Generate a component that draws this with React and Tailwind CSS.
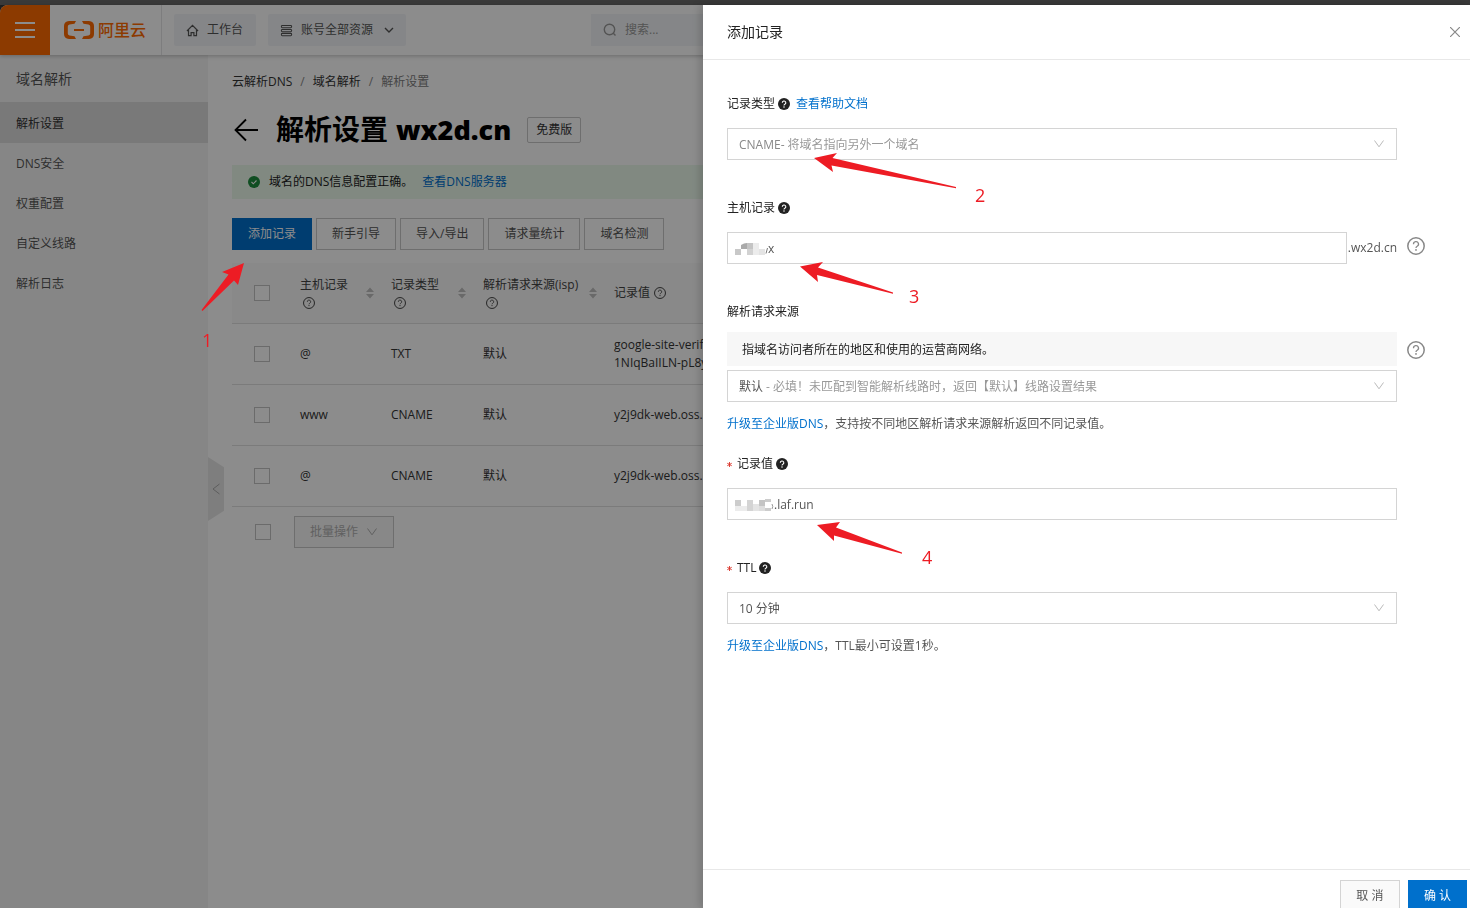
import React from "react";

const HelpSolid = () => (
  <svg className="size-3 shrink-0" viewBox="0 0 12 12" aria-hidden="true">
    <circle cx="6" cy="6" r="6" fill="#222" />
    <path d="M4.3 4.8a1.75 1.75 0 1 1 2.6 1.5c-.6.35-.9.6-.9 1.1" fill="none" stroke="#fff" strokeWidth="1.1" />
    <circle cx="6" cy="9" r=".75" fill="#fff" />
  </svg>
);

const HelpOutline = ({ className }) => (
  <svg className={className} viewBox="0 0 18 18" fill="none" stroke="currentColor" strokeWidth="1.5" aria-hidden="true">
    <circle cx="9" cy="9" r="8.2" />
    <path d="M6.5 7.2a2.5 2.5 0 1 1 3.7 2.1c-.8.5-1.2.8-1.2 1.6" strokeWidth="1.3" />
    <circle cx="9" cy="12.9" r=".9" fill="currentColor" stroke="none" />
  </svg>
);

const Chevron = ({ className }) => (
  <svg className={className} viewBox="0 0 12 12" fill="none" stroke="currentColor" aria-hidden="true">
    <path d="M1.5 2.5 6 8.8l4.5-6.3" />
  </svg>
);

const Sorter = () => (
  <svg className="h-3 w-2 shrink-0 text-[#bfbfbf]" viewBox="0 0 8 12" fill="currentColor" aria-hidden="true">
    <path d="M4 .5 8 5H0zM4 11.5 8 7H0z" />
  </svg>
);

const Check = ({ label }) => (
  <input
    type="checkbox"
    aria-label={label}
    className="block size-4 appearance-none border border-[#c4c4c4] bg-white"
  />
);

const menu = ["解析设置", "DNS安全", "权重配置", "自定义线路", "解析日志"];
const actions = ["新手引导", "导入/导出", "请求量统计", "域名检测"];
const records = [
  { host: "@", type: "TXT", value: ["google-site-verif", "1NIqBaIILN-pL8y"] },
  { host: "www", type: "CNAME", value: ["y2j9dk-web.oss.la"] },
  { host: "@", type: "CNAME", value: ["y2j9dk-web.oss.la"] },
];

function Header() {
  return (
    <header className="relative z-10 flex h-[50px] shrink-0 items-center rounded-tl-lg bg-white shadow-[0_1px_4px_rgba(0,0,0,0.25)]">
      <button aria-label="菜单" className="flex size-[50px] items-center justify-center rounded-tl-lg bg-[#ff6a00]">
        <svg className="h-4 w-5" viewBox="0 0 20 16" fill="#fff" aria-hidden="true">
          <path d="M0 0h20v2H0zM0 7h20v2H0zM0 14h20v2H0z" />
        </svg>
      </button>
      <a href="#home" className="flex h-[50px] w-28 items-center gap-1 border-r border-[#e3e4e6] pl-[14px] text-[#ff6a00]">
        <svg className="h-[18px] w-[30px]" viewBox="0 0 30 18" fill="currentColor" aria-hidden="true">
          <path d="M12 0H5Q0 .5 0 5v8q0 4.500 5 5h7l-1.500-2.800L5.500 14.500Q3.800 14 3.800 12.500v-7Q3.800 4 5.500 3.500l5-.7z" />
          <path d="M18 0h7q5 .5 5 5v8q0 4.500-5 5h-7l1.500-2.800 5-.7q1.700-.5 1.700-2v-7q0-1.500-1.700-2l-5-.7z" />
          <path d="M10 8h10v2H10z" />
        </svg>
        <span className="text-base font-medium">阿里云</span>
      </a>
      <button className="ml-3 flex h-8 items-center gap-2 rounded-xs bg-[#f3f5f8] pl-3 pr-[13px] text-[#555]">
        <svg className="size-[13px]" viewBox="0 0 14 14" fill="none" stroke="currentColor" strokeWidth="1.300" aria-hidden="true">
          <path d="M1 7.500 7 1.500l6 6M2.700 6.500v6h2.800V9.300h3v3.200h2.800v-6" />
        </svg>
        工作台
      </button>
      <button className="ml-3 flex h-8 items-center gap-2 rounded-xs bg-[#f3f5f8] px-3 text-[#555]">
        <svg className="size-[13px]" viewBox="0 0 14 14" fill="none" stroke="currentColor" strokeWidth="1.100" aria-hidden="true">
          <rect x="1.500" y="1.500" width="11" height="2.500" rx="1" />
          <rect x="1.500" y="5.800" width="11" height="2.500" rx="1" />
          <rect x="1.500" y="10.100" width="11" height="2.500" rx="1" />
        </svg>
        账号全部资源
        <svg className="ml-[3px] size-2.5" viewBox="0 0 10 10" fill="none" stroke="currentColor" strokeWidth="1.400" aria-hidden="true">
          <path d="m1 3 4 4 4-4" />
        </svg>
      </button>
      <label className="ml-[185px] flex h-8 flex-1 items-center gap-2 bg-[#f3f5f8] px-3 text-[#999]">
        <svg className="size-3.5" viewBox="0 0 14 14" fill="none" stroke="currentColor" strokeWidth="1.400" aria-hidden="true">
          <circle cx="6.500" cy="6.500" r="5.200" />
          <path d="m10.300 10.300 2.200 2.200" />
        </svg>
        <input aria-label="搜索" placeholder="搜索..." className="min-w-0 flex-1 bg-transparent placeholder:text-[#999]" />
      </label>
    </header>
  );
}

function Sidebar() {
  return (
    <aside className="w-52 shrink-0 bg-[#f5f5f5]">
      <h2 className="flex h-[47px] items-center px-4 text-sm text-[#555]">域名解析</h2>
      <nav className="flex flex-col">
        {menu.map((m, i) => (
          <a
            key={m}
            href="#menu"
            className={"flex items-center px-4 " + (i === 0 ? "h-[41px] bg-[#dcdcdc] pt-0.5 text-[#333]" : "h-10 pt-0.5 text-[#555]")}
          >
            {m}
          </a>
        ))}
      </nav>
    </aside>
  );
}

const HeadCell = ({ title }) => (
  <div className="flex items-center justify-between gap-2 pr-[17px]">
    <div className="leading-[18px]">
      <div className="whitespace-nowrap">{title}</div>
      <HelpOutline className="ml-[3px] mt-[3px] size-3" />
    </div>
    <Sorter />
  </div>
);

function RecordTable() {
  return (
    <table className="mt-[13px] w-full table-fixed border-collapse text-left text-[#333]">
      <colgroup>
        <col className="w-[68px]" />
        <col className="w-[91px]" />
        <col className="w-[92px]" />
        <col className="w-[131px]" />
        <col />
      </colgroup>
      <thead>
        <tr className="h-[60px] border-b border-[#e0e0e0] bg-[#fafafa] text-[#444]">
          <th className="pl-[22px]"><Check label="全选" /></th>
          <th className="font-normal"><HeadCell title="主机记录" /></th>
          <th className="font-normal"><HeadCell title="记录类型" /></th>
          <th className="font-normal"><HeadCell title="解析请求来源(isp)" /></th>
          <th className="font-normal">
            <div className="flex items-center gap-1">
              记录值
              <HelpOutline className="size-3" />
            </div>
          </th>
        </tr>
      </thead>
      <tbody>
        {records.map((r, i) => (
          <tr key={i} className="h-[61px] border-b border-[#e0e0e0]">
            <td className="pl-[22px]"><Check label={"选择 " + r.host} /></td>
            <td>{r.host}</td>
            <td>{r.type}</td>
            <td>默认</td>
            <td className="leading-[18px]">
              {r.value.map((v) => (
                <div key={v}>{v}</div>
              ))}
            </td>
          </tr>
        ))}
      </tbody>
    </table>
  );
}

function Main() {
  return (
    <main className="relative min-w-0 flex-1 px-6 pt-4">
      <button
        aria-label="收起"
        className="absolute left-0 top-[402px] flex h-16 w-4 items-center justify-center bg-[#e6e6e6] text-[#aaa] [clip-path:polygon(0_0,100%_16%,100%_84%,0_100%)]"
      >
        <svg className="h-3 w-2" viewBox="0 0 8 12" fill="none" stroke="currentColor" aria-hidden="true">
          <path d="M7.500 1 1 6l6.500 5" />
        </svg>
      </button>
      <nav className="flex h-[22px] items-center gap-2 text-[#333]">
        <a href="#dns">云解析DNS</a>
        <span className="text-[#888]">/</span>
        <a href="#domain">域名解析</a>
        <span className="text-[#888]">/</span>
        <span className="text-[#808080]">解析设置</span>
      </nav>
      <div className="mt-4 flex h-[42px] items-center text-black">
        <button aria-label="返回" className="mr-4">
          <svg className="h-6 w-7" viewBox="0 0 28 24" fill="none" stroke="currentColor" strokeWidth="1.800" aria-hidden="true">
            <path d="M26 12H3.500M14 1.500 3.500 12 14 22.500" />
          </svg>
        </button>
        <h1 className="flex items-center gap-2 text-[28px] font-bold">
          <span>解析设置</span>
          <span className="text-[27px] font-extrabold">wx2d.cn</span>
        </h1>
        <span className="ml-4 flex h-[26px] items-center rounded-xs border border-[#c8c8c8] px-2 text-[#333]">免费版</span>
      </div>
      <div className="mt-[14px] flex h-[34px] items-center bg-[#ebfaec] px-4 text-[#222]">
        <svg className="mr-[9px] size-3" viewBox="0 0 12 12" aria-hidden="true">
          <circle cx="6" cy="6" r="6" fill="#1e8e3e" />
          <path d="m3.500 6 1.800 1.800 3.200-3.300" fill="none" stroke="#fff" strokeWidth="1.100" />
        </svg>
        域名的DNS信息配置正确。
        <a href="#server" className="ml-[9px] text-[#0070cc]">查看DNS服务器</a>
      </div>
      <div className="mt-[19px] flex gap-1">
        <button className="h-8 border border-[#0070cc] bg-[#0070cc] px-[15px] text-white">添加记录</button>
        {actions.map((a) => (
          <button key={a} className="h-8 border border-[#c8c8c8] px-[15px] text-[#555]">{a}</button>
        ))}
      </div>
      <RecordTable />
      <div className="mt-[9px] flex items-center pl-[23px]">
        <Check label="全选本页" />
        <button disabled className="ml-[23px] flex h-8 items-center gap-2 border border-[#c8c8c8] bg-[#f7f7f7] px-[15px] text-[#b0b0b0]">
          批量操作
          <Chevron className="size-3" />
        </button>
      </div>
    </main>
  );
}

function Field({ label, id, required, help, link, tip, note, tight, children }) {
  return (
    <div>
      <div className="flex h-6 items-center">
        {required && (
          <svg className="mr-[5px] size-[5px]" viewBox="0 0 10 10" stroke="#d93026" strokeWidth="1.800" aria-label="必填">
            <path d="M5 0v10M.5 2.500l9 5M9.500 2.500l-9 5" />
          </svg>
        )}
        <label htmlFor={id} className="mr-[3px] text-[#222]">{label}</label>
        {help && <HelpSolid />}
        {link && <a href="#help" className="ml-[6px] text-[#0070cc]">{link}</a>}
      </div>
      <div className={"flex gap-[10px] " + (tight ? "mt-2" : "mt-3")}>
        <div className="min-w-0 flex-1">{children}</div>
        <div className={"w-[18px] text-[#888] " + (tight ? "pt-[9px]" : "pt-[5px]")}>
          {tip && <HelpOutline className="size-[18px]" />}
        </div>
      </div>
      {note && (
        <p className="mt-[11px] h-[21px] leading-[22px] text-[#555]">
          <a href="#upgrade" className="text-[#0070cc]">升级至企业版DNS</a>
          {note}
        </p>
      )}
    </div>
  );
}

function Select({ id, value, hint, tone }) {
  return (
    <div className="flex h-8 items-center border border-[#d4d4d4] px-[11px] pt-0.5">
      <select id={id} className={"field-sizing-content appearance-none bg-transparent " + tone}>
        <option>{value}</option>
      </select>
      {hint && <span className="ml-[3px] text-[#999]">{hint}</span>}
      <Chevron className="mb-0.5 ml-auto size-3 text-[#bbb]" />
    </div>
  );
}

function Drawer() {
  return (
    <section
      role="dialog"
      aria-label="添加记录"
      className="fixed bottom-0 right-0 top-[5px] z-30 flex w-[767px] flex-col overflow-hidden bg-white shadow-[-4px_0_8px_rgba(0,0,0,0.15)]"
    >
      <header className="flex h-[55px] shrink-0 items-center justify-between border-b border-[#e8e8e8] pl-6 pr-[10px]">
        <h2 className="text-sm text-[#222]">添加记录</h2>
        <button aria-label="关闭" className="text-[#888]">
          <svg className="size-[10px]" viewBox="0 0 10 10" fill="none" stroke="currentColor" strokeWidth="1.200" aria-hidden="true">
            <path d="m0 0 10 10M10 0 0 10" />
          </svg>
        </button>
      </header>
      <form className="flex flex-1 flex-col overflow-hidden pl-6 pr-[45px] pt-8">
        <div className="flex flex-col gap-9">
          <Field id="type" label="记录类型" help link="查看帮助文档">
            <Select id="type" value="CNAME-" hint="将域名指向另外一个域名" tone="text-[#888]" />
          </Field>
          <Field id="host" label="主机记录" help tip>
            <div className="flex items-center gap-px text-[#555]">
              <div className="flex h-8 min-w-0 flex-1 items-center border border-[#d4d4d4] pl-[7px] pt-0.5">
                <svg className="h-3 w-[33px] shrink-0" viewBox="0 0 33 12" aria-hidden="true">
                  <path d="M0 6h6v6H0z" fill="#c8c8c8" />
                  <path d="M6 6V2q3-2 6-2v6z" fill="#aaa" />
                  <path d="M12 0h6v6h-6z" fill="#c4c4c4" />
                  <path d="M12 6h6v6h-6z" fill="#d2d2d2" />
                  <path d="M18 0h6v12h-6z" fill="#ececec" />
                  <path d="M24 6h6v6h-6z" fill="#e4e4e4" />
                  <path d="M31 10.500 32.500 5" stroke="#777" fill="none" />
                </svg>
                <input id="host" defaultValue="x" className="min-w-0 flex-1 bg-transparent" />
              </div>
              .wx2d.cn
            </div>
          </Field>
          <Field
            id="line"
            label="解析请求来源"
            tip
            tight
            note="，支持按不同地区解析请求来源解析返回不同记录值。"
          >
            <div className="mb-1 flex h-[34px] items-center bg-[#f7f7f7] px-[15px] pt-0.5 text-[#222]">
              指域名访问者所在的地区和使用的运营商网络。
            </div>
            <Select id="line" value="默认" hint="- 必填！未匹配到智能解析线路时，返回【默认】线路设置结果" tone="text-[#555]" />
          </Field>
        </div>
        <div className="mt-[18px] flex flex-col gap-9">
          <Field id="value" label="记录值" required help>
            <div className="flex h-8 items-center border border-[#d4d4d4] pl-[7px] pt-0.5 text-[#555]">
              <svg className="h-3 w-[39px] shrink-0" viewBox="0 0 39 12" aria-hidden="true">
                <path d="M0 1h6v6H0z" fill="#ccc" />
                <path d="M0 7h12v5H0z" fill="#ececec" />
                <path d="M12 1h6v11h-6z" fill="#d4d4d4" />
                <path d="M18 5h6v7h-6z" fill="#e4e4e4" />
                <path d="M24 1h6v6h-6z" fill="#c4c4c4" />
                <path d="M30 0h6v3h-6zM30 9h6v3h-6z" fill="#ccc" />
                <path d="M24 7h6v5h-6z" fill="#ddd" />
                <path d="M37 5q1.500 2.500 0 5" stroke="#999" fill="none" />
              </svg>
              <input id="value" defaultValue=".laf.run" className="min-w-0 flex-1 bg-transparent" />
            </div>
          </Field>
          <Field id="ttl" label="TTL" required help note="，TTL最小可设置1秒。">
            <Select id="ttl" value="10 分钟" tone="text-[#555]" />
          </Field>
        </div>
      </form>
      <footer className="flex h-[39px] shrink-0 items-start justify-end gap-2 border-t border-[#e8e8e8] pr-[3px] pt-[10px]">
        <button className="h-8 w-[60px] shrink-0 border border-[#d4d4d4] bg-[#fafafa] text-[#555]">取 消</button>
        <button className="h-8 shrink-0 bg-[#0070cc] px-4 text-white">确 认</button>
      </footer>
    </section>
  );
}

function Annotations() {
  return (
    <div className="pointer-events-none fixed left-0 top-0 z-40 text-lg leading-5 text-[#ed1c24]">
      <svg className="absolute left-0 top-0 h-[908px] w-[1470px]" viewBox="0 0 1470 908" fill="currentColor" aria-hidden="true">
        <path d="M244 263 222 272l6.500 2.500L201.500 310l1 1L234 280.500l4 4.500z" />
        <path d="M814 158l23-5-4.500 5L956 187v1.300L831.500 165.500 833 172z" />
        <path d="M800 266.500 823 262l-5 5.500L893 292.500v1.300L817 275l1 7z" />
        <path d="M817 525l23-3-4 5.500L902 552.500v1.300L834 535.500v5.500z" />
      </svg>
      <span className="absolute left-[202px] top-[330px]">1</span>
      <span className="absolute left-[975px] top-[185px]">2</span>
      <span className="absolute left-[909px] top-[286px]">3</span>
      <span className="absolute left-[922px] top-[547px]">4</span>
    </div>
  );
}

export default function App() {
  return (
    <div className="flex h-screen flex-col overflow-hidden bg-[#3a3a3a] pt-[5px] font-['Open_Sans','Noto_Sans_CJK_SC',sans-serif] text-xs">
      <Header />
      <div className="flex min-h-0 flex-1 bg-white">
        <Sidebar />
        <Main />
      </div>
      <div className="fixed inset-x-0 bottom-0 top-[5px] z-20 bg-black/45" />
      <Drawer />
      <Annotations />
    </div>
  );
}
